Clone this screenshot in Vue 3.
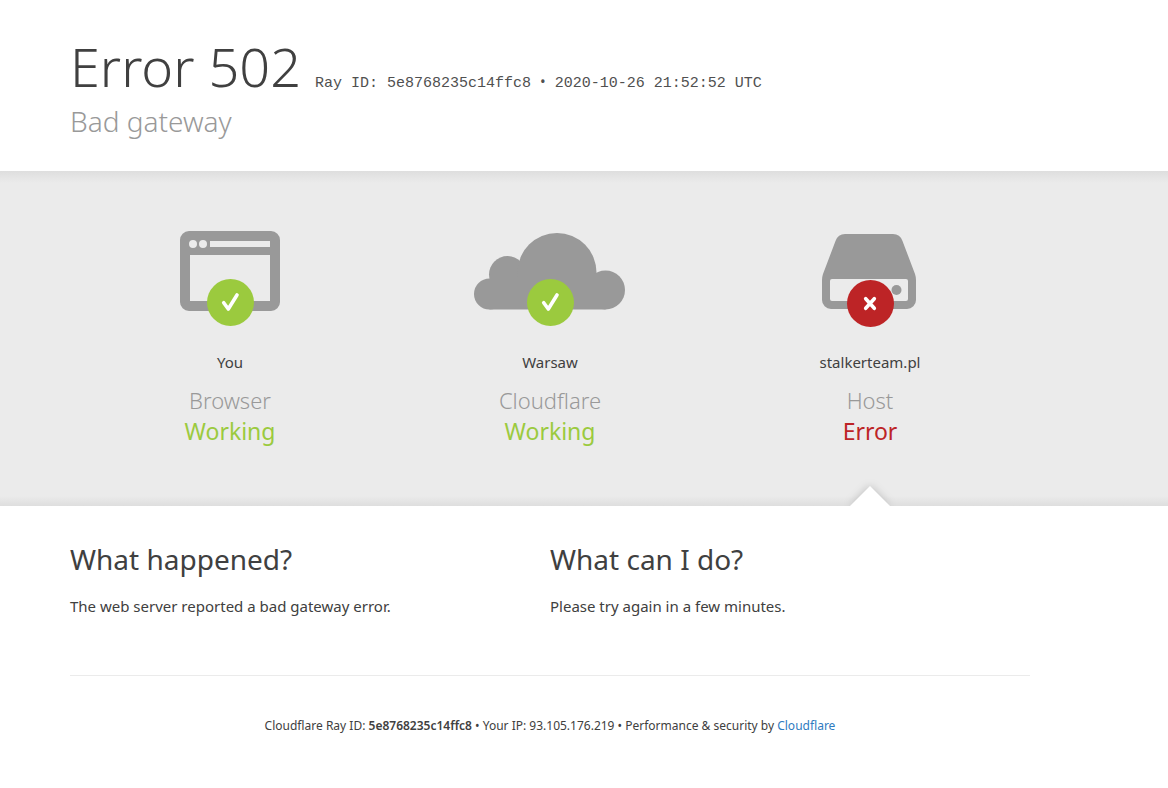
<script setup>
const rayId = '5e8768235c14ffc8'
const nodes = [
  { kind: 'browser', place: 'You', role: 'Browser', status: 'Working', ok: true },
  { kind: 'cloud', place: 'Warsaw', role: 'Cloudflare', status: 'Working', ok: true },
  { kind: 'host', place: 'stalkerteam.pl', role: 'Host', status: 'Error', ok: false }
]
</script>

<template>
  <div class="page">
    <header class="wrap header">
      <h1>
        <span class="code">Error 502</span>
        <small class="ray">Ray ID: {{ rayId }} <span class="dot">&bull;</span> 2020-10-26 21:52:52 UTC</small>
      </h1>
      <h2 class="subtitle">Bad gateway</h2>
    </header>

    <section class="band">
      <div class="wrap nodes">
        <div v-for="n in nodes" :key="n.kind" class="node" :class="{ failed: !n.ok }">
          <svg class="icon" viewBox="0 0 160 100" width="160" height="100" aria-hidden="true">
            <path
              v-if="n.kind === 'browser'"
              fill="#999"
              fill-rule="evenodd"
              d="M39 2H121a9 9 0 0 1 9 9V73a9 9 0 0 1-9 9H39a9 9 0 0 1-9-9V11a9 9 0 0 1 9-9ZM40 26V72H120V26ZM60 12V18H120V12ZM39 15a4 4 0 1 0 8 0a4 4 0 1 0-8 0ZM49 15a4 4 0 1 0 8 0a4 4 0 1 0-8 0Z"
            />
            <g v-else-if="n.kind === 'cloud'" fill="#999">
              <circle cx="19.5" cy="65" r="15.5" />
              <circle cx="37.5" cy="45.5" r="18.5" />
              <circle cx="87" cy="43.500" r="39.5" />
              <circle cx="135.500" cy="61" r="19.5" />
              <rect x="19.5" y="50" width="116" height="30.500" />
            </g>
            <template v-else>
              <path
                fill="#999"
                fill-rule="evenodd"
                d="M55 5H103Q110 5 112.500 12L125 45Q126 48 126 51V71a9 9 0 0 1-9 9H41a9 9 0 0 1-9-9V51Q32 48 33 45L45.500 12Q48 5 55 5ZM42 50Q40 50 40 52V70Q40 72 42 72H116Q118 72 118 70V52Q118 50 116 50Z"
              />
              <circle cx="106.500" cy="61" r="5" fill="#999" />
            </template>
            <template v-if="n.ok">
              <circle cx="80.500" cy="73.500" r="23.500" fill="#9bca3e" />
              <path d="M73.700 73.700L78.300 80L87 66" fill="none" stroke="#fff" stroke-width="3.600" stroke-linecap="round" stroke-linejoin="round" />
            </template>
            <template v-else>
              <circle cx="80.500" cy="74.500" r="23.500" fill="#bd2426" />
              <path d="M75.700 69.700L84.300 79.300M84.300 69.700L75.700 79.300" fill="none" stroke="#fff" stroke-width="3.600" stroke-linecap="round" />
            </template>
          </svg>
          <span class="place">{{ n.place }}</span>
          <h3 class="role">{{ n.role }}</h3>
          <span class="status">{{ n.status }}</span>
          <svg v-if="!n.ok" class="arrow" viewBox="0 0 60 30" width="60" height="30" aria-hidden="true">
            <path d="M10 30L30 10L50 30Z" />
          </svg>
        </div>
      </div>
    </section>

    <main class="wrap answers">
      <section>
        <h2>What happened?</h2>
        <p>The web server reported a bad gateway error.</p>
      </section>
      <section>
        <h2>What can I do?</h2>
        <p>Please try again in a few minutes.</p>
      </section>
    </main>

    <footer class="wrap">
      <p class="foot">
        Cloudflare Ray ID: <strong>{{ rayId }}</strong> &bull; Your IP: 93.105.176.219 &bull; Performance &amp; security by <a href="#">Cloudflare</a>
      </p>
    </footer>
  </div>
</template>

<style>
body {
  background: #fff;
}
</style>

<style scoped>
.page {
  font-family: "Noto Sans", "Open Sans", sans-serif;
  font-size: 15px;
  line-height: 24px;
  color: #404040;
}
h1, h2, h3, p {
  margin: 0;
  font-weight: 400;
}
.wrap {
  box-sizing: border-box;
  max-width: 960px;
  margin-left: 70px;
  margin-right: 70px;
}
.header {
  padding-top: 32px;
  padding-bottom: 30px;
}
h1 {
  display: flex;
  align-items: baseline;
  flex-wrap: wrap;
  column-gap: 14px;
  line-height: 69px;
}
.code {
  font-size: 54px;
  font-weight: 300;
}
.ray {
  font-family: "Liberation Mono", monospace;
  font-size: 15px;
  line-height: 24px;
  color: #505050;
}
.dot {
  font-family: "Noto Sans", sans-serif;
}
.subtitle {
  font-size: 28px;
  line-height: 40px;
  font-weight: 300;
  color: #999;
}
.band {
  background:
    linear-gradient(#dedede, #ebebeb00) top / 100% 12px no-repeat,
    linear-gradient(#ebebeb00, #dedede) bottom / 100% 10px no-repeat,
    #ebebeb;
}
.nodes {
  display: grid;
  grid-template-columns: repeat(3, 1fr);
}
.node {
  position: relative;
  display: flex;
  flex-direction: column;
  align-items: center;
  padding: 58px 0 59px;
}
.place {
  margin-top: 21px;
}
.role {
  margin-top: 11px;
  font-size: 22px;
  line-height: 31px;
  font-weight: 300;
  color: #999;
}
.status {
  font-size: 23px;
  line-height: 31px;
  color: #9bca3e;
}
.failed .status {
  color: #bd2426;
}
.arrow {
  position: absolute;
  bottom: 0;
  left: 50%;
  margin-left: -30px;
}
.arrow path {
  fill: #fff;
  filter: drop-shadow(0 0 4px #00000033);
}
.answers {
  display: grid;
  grid-template-columns: 1fr 1fr;
  padding-top: 33px;
  padding-bottom: 57px;
}
.answers h2 {
  font-size: 28px;
  line-height: 40px;
}
.answers p {
  margin-top: 15px;
}
footer {
  border-top: 1px solid #ebebeb;
  padding: 38px 0;
  text-align: center;
}
.foot {
  font-size: 12px;
}
.foot strong {
  font-weight: 600;
}
.foot a {
  color: #2f7bbf;
  text-decoration: none;
}
</style>
